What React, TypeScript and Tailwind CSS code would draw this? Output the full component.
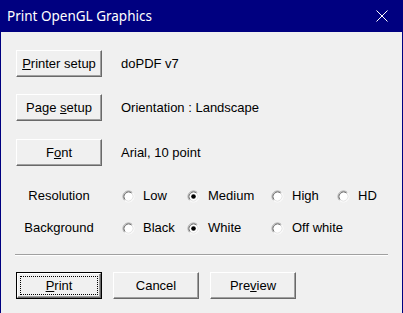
import type { ReactNode } from 'react'

const font = { fontFamily: '"Liberation Sans", Arial, sans-serif' }

function Btn({ children, primary = false }: { children: ReactNode; primary?: boolean }) {
  if (primary) {
    return (
      <div className="w-[86px] h-[27px] border border-black">
        <div className="h-full w-full border border-t-white border-l-white border-b-[#696969] border-r-[#696969] bg-[#f0f0f0] p-[2px] shadow-[inset_-1px_-1px_0_#a0a0a0]">
          <div className="h-full w-full border border-dotted border-black flex items-center justify-center text-[13px] text-black">
            <span>{children}</span>
          </div>
        </div>
      </div>
    )
  }
  return (
    <div className="w-[86px] h-[27px] border border-t-white border-l-white border-b-[#696969] border-r-[#696969] bg-[#f0f0f0] shadow-[inset_-1px_-1px_0_#a0a0a0] flex items-center justify-center text-[13px] text-black">
      <span>{children}</span>
    </div>
  )
}

function Radio({ checked = false }: { checked?: boolean }) {
  return (
    <svg width="13" height="13" viewBox="0 0 13 13" className="shrink-0">
      <circle cx="6.5" cy="6.5" r="5" fill="#ffffff" />
      <path d="M2.61 10.39 A5.5 5.5 0 0 1 10.39 2.61" fill="none" stroke="#a0a0a0" strokeWidth="1" />
      <path d="M10.39 2.61 A5.5 5.5 0 0 1 2.61 10.39" fill="none" stroke="#ffffff" strokeWidth="1" />
      <path d="M3.32 9.68 A4.5 4.5 0 0 1 9.68 3.32" fill="none" stroke="#696969" strokeWidth="1" />
      <path d="M9.68 3.32 A4.5 4.5 0 0 1 3.32 9.68" fill="none" stroke="#e3e3e3" strokeWidth="1" />
      {checked && <circle cx="6.5" cy="6.5" r="2.3" fill="#000000" />}
    </svg>
  )
}

function Option({ label, checked = false, width }: { label: string; checked?: boolean; width: string }) {
  return (
    <div className={`flex items-center gap-[8px] ${width}`}>
      <Radio checked={checked} />
      <span>{label}</span>
    </div>
  )
}

export default function App() {
  return (
    <div className="w-[403px] h-[313px] flex flex-col border-x border-[#000080] bg-[#f0f0f0]" style={font}>
      <div className="h-[32px] shrink-0 bg-[#000080] flex items-center justify-between pl-[6px] pr-[14px]">
        <span className="text-white text-[13.5px]" style={{ fontFamily: '"Noto Sans", sans-serif' }}>
          Print OpenGL Graphics
        </span>
        <svg width="12" height="12" viewBox="0 0 12 12">
          <path d="M0.5 0.5 L11.5 11.5 M11.5 0.5 L0.5 11.5" stroke="#ffffff" strokeWidth="1" />
        </svg>
      </div>

      <div className="flex-1 pl-[15px] text-[13px] text-black">
        <div className="mt-[18px] flex items-center gap-[19px]">
          <Btn>
            <span className="underline">P</span>rinter setup
          </Btn>
          <span>doPDF v7</span>
        </div>
        <div className="mt-[17px] flex items-center gap-[19px]">
          <Btn>
            Page <span className="underline">s</span>etup
          </Btn>
          <span>Orientation : Landscape</span>
        </div>
        <div className="mt-[18px] flex items-center gap-[19px]">
          <Btn>
            F<span className="underline">o</span>nt
          </Btn>
          <span>Arial, 10 point</span>
        </div>

        <div className="mt-[20px] h-[20px] flex items-center">
          <span className="w-[86px] text-center">Resolution</span>
          <div className="ml-[20px] flex items-center">
            <Option label="Low" width="w-[65px]" />
            <Option label="Medium" checked width="w-[84px]" />
            <Option label="High" width="w-[66px]" />
            <Option label="HD" width="w-[50px]" />
          </div>
        </div>
        <div className="mt-[12px] h-[20px] flex items-center">
          <span className="w-[86px] text-center">Background</span>
          <div className="ml-[20px] flex items-center">
            <Option label="Black" width="w-[65px]" />
            <Option label="White" checked width="w-[84px]" />
            <Option label="Off white" width="w-[90px]" />
          </div>
        </div>

        <div className="mt-[16px] ml-[-1px] w-[373px] h-[2px] border-t border-t-[#a0a0a0] border-b border-b-white" />

        <div className="mt-[16px] flex items-center gap-[11px]">
          <Btn primary>
            <span className="underline">P</span>rint
          </Btn>
          <Btn>Cancel</Btn>
          <Btn>
            Pre<span className="underline">v</span>iew
          </Btn>
        </div>
      </div>
    </div>
  )
}
